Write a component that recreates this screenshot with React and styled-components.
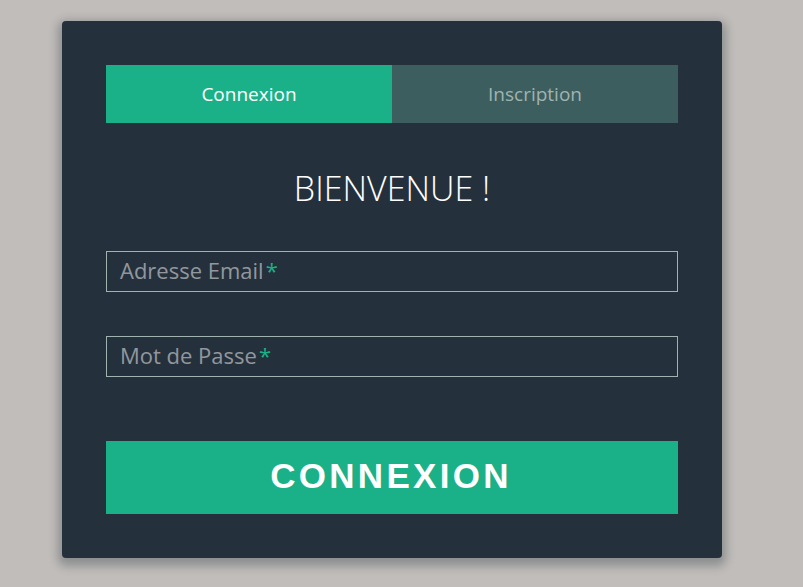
import React from 'react';
import styled, { createGlobalStyle } from 'styled-components';

const GlobalStyle = createGlobalStyle`
    * { box-sizing: border-box; }
    html, body {
        margin: 0;
        padding: 0;
        background: #c1bdba;
        font-family: "Open Sans", "Noto Sans", sans-serif;
    }
`;

const Page = styled.div`
    padding: 21px 0 0 62px;
    min-height: 100vh;
`;

const Card = styled.div`
    width: 660px;
    padding: 44px;
    background: #24303c;
    border-radius: 4px;
    box-shadow: 0 4px 10px 4px rgba(19, 35, 47, .3);
    display: flex;
    flex-direction: column;
`;

const Tabs = styled.div`
    display: grid;
    grid-template-columns: 1fr 1fr;
    height: 58px;
`;

const Tab = styled.div`
    display: flex;
    align-items: center;
    justify-content: center;
    font-size: 19px;
    background: ${p => (p.$active ? '#1ab188' : '#3c5e5e')};
    color: ${p => (p.$active ? '#ffffff' : '#a0b3b0')};
`;

const Title = styled.h1`
    margin: 45px 0 0;
    height: 40px;
    line-height: 40px;
    text-align: center;
    font-size: 34px;
    font-weight: 300;
    color: #ffffff;
`;

const Field = styled.div`
    position: relative;
    margin-top: ${p => p.$top}px;
    height: 41px;
    border: 1px solid #a0b3b0;
`;

const Label = styled.label`
    position: absolute;
    left: 13px;
    top: calc(50% - 2px);
    transform: translateY(-50%);
    font-size: 22px;
    color: rgba(255, 255, 255, .5);
    pointer-events: none;
`;

const Req = styled.span`
    margin-left: 2px;
    color: #1ab188;
`;

const Input = styled.input`
    width: 100%;
    height: 100%;
    border: none;
    background: none;
    outline: none;
    padding: 0 13px;
    color: #ffffff;
    font-size: 22px;
`;

const Button = styled.button`
    margin-top: 64px;
    height: 73px;
    border: none;
    background: #1ab188;
    color: #ffffff;
    font-family: "Liberation Sans", Arial, sans-serif;
    font-weight: 700;
    font-size: 35px;
    letter-spacing: 3.3px;
    text-transform: uppercase;
    padding: 0 2px 4px 0;
`;

export default function App() {
    return (
        <Page>
            <GlobalStyle />
            <Card>
                <Tabs>
                    <Tab $active>Connexion</Tab>
                    <Tab>Inscription</Tab>
                </Tabs>
                <Title>BIENVENUE !</Title>
                <Field $top={43}>
                    <Label>Adresse Email<Req>*</Req></Label>
                    <Input type="email" />
                </Field>
                <Field $top={44}>
                    <Label>Mot de Passe<Req>*</Req></Label>
                    <Input type="password" />
                </Field>
                <Button>Connexion</Button>
            </Card>
        </Page>
    );
}
